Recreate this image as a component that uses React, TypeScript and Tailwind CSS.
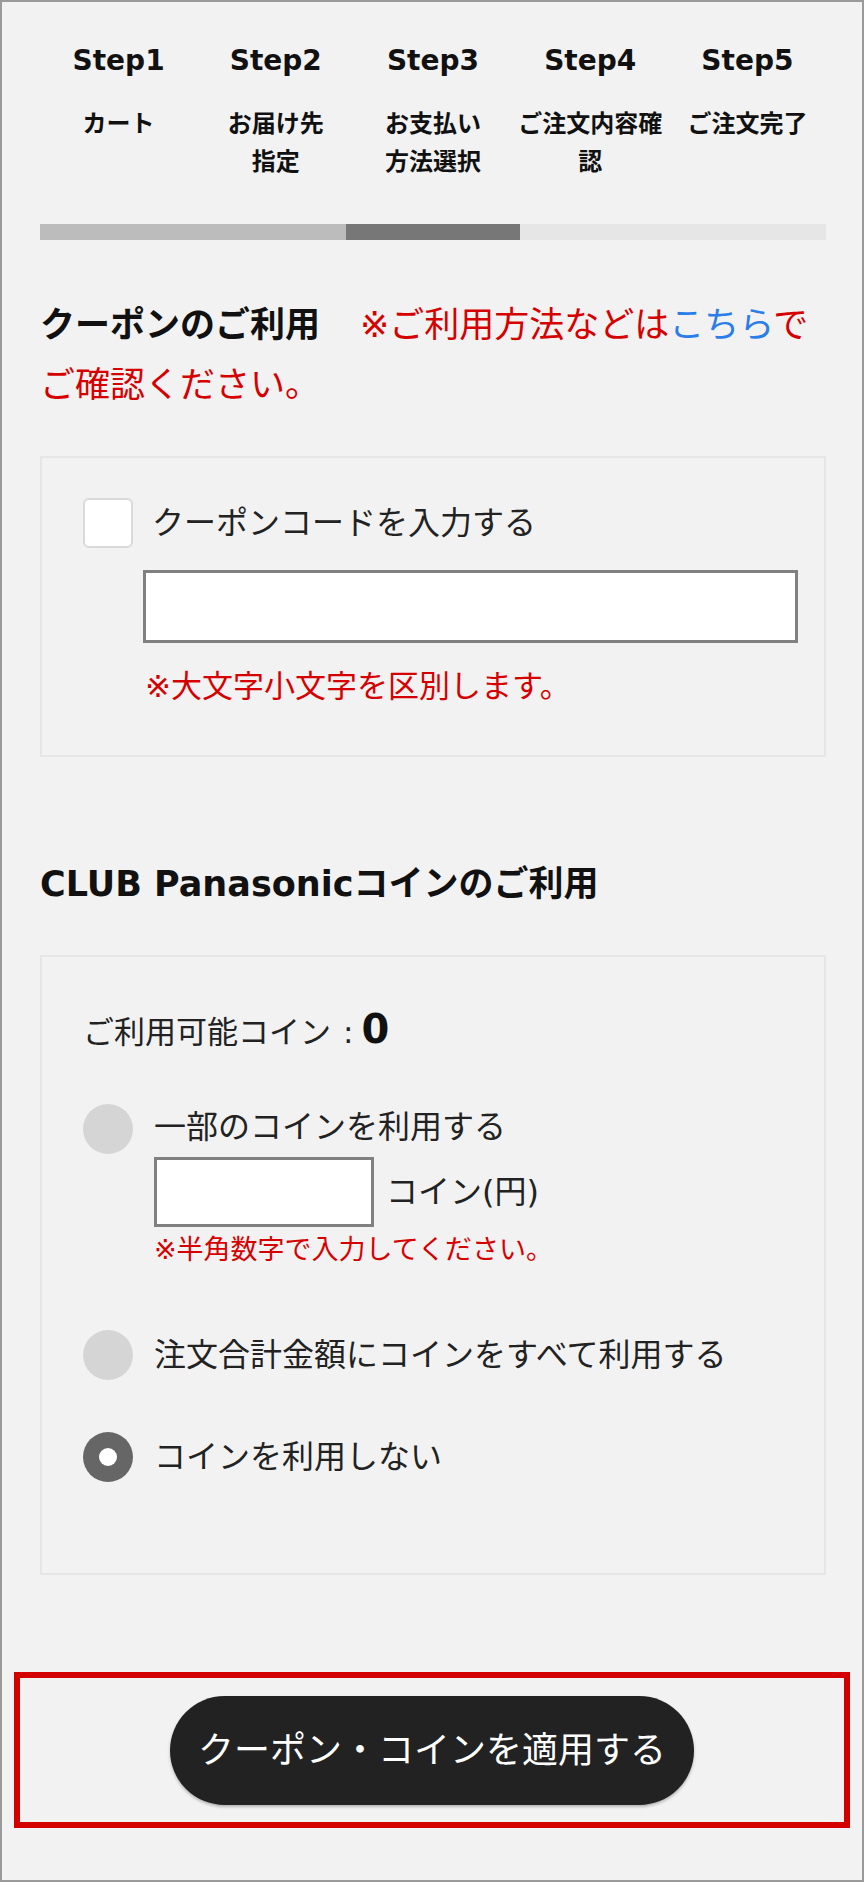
import React from 'react';

const steps = [
  { no: 'Step1', label: ['カート'] },
  { no: 'Step2', label: ['お届け先', '指定'] },
  { no: 'Step3', label: ['お支払い', '方法選択'] },
  { no: 'Step4', label: ['ご注文内容確認'] },
  { no: 'Step5', label: ['ご注文完了'] },
];

function Radio({ checked }: { checked?: boolean }) {
  if (checked) {
    return (
      <span className="flex h-[50px] w-[50px] shrink-0 items-center justify-center rounded-full bg-[#666666]">
        <span className="h-[18px] w-[18px] rounded-full bg-white" />
      </span>
    );
  }
  return <span className="block h-[50px] w-[50px] shrink-0 rounded-full bg-[#d5d5d5]" />;
}

export default function App() {
  return (
    <div className="h-[1882px] border-2 border-[#9a9a9a] bg-[#f2f2f2] font-['DejaVu_Sans','Noto_Sans_CJK_JP',sans-serif] text-[#222222]">
      <div className="pl-[38px] pr-[36px] pt-[42px]">
        {/* Steps */}
        <div className="grid grid-cols-5">
          {steps.map((s) => (
            <div key={s.no} className="flex flex-col items-center text-center">
              <div className="text-[28px] font-bold leading-[34px] text-[#111111]">{s.no}</div>
              <div className="mt-[27px] text-[24px] font-bold leading-[38px] text-[#111111]">
                {s.label.map((l, i) => (
                  <React.Fragment key={i}>
                    {i > 0 && <br />}
                    {l}
                  </React.Fragment>
                ))}
              </div>
            </div>
          ))}
        </div>

        {/* Progress bar: done / current / pending */}
        <div className="mt-[43px] flex h-4">
          <div className="w-[306px] bg-[#bcbcbc]" />
          <div className="w-[174px] bg-[#777777]" />
          <div className="flex-1 bg-[#e6e6e6]" />
        </div>

        {/* Coupon heading */}
        <div className="mt-[55px] text-[35px] leading-[60px]">
          <span className="font-bold text-[#111111]">クーポンのご利用</span>
          <span className="ml-[40px] text-[#d60000]">
            ※ご利用方法などは<a className="text-[#2b7de9]">こちら</a>で
            <br />
            ご確認ください。
          </span>
        </div>

        {/* Coupon box */}
        <div className="mt-[41px] border-2 border-[#e6e6e6] pb-[49px] pl-[41px] pt-[40px]">
          <label className="flex items-center">
            <span className="block h-[50px] w-[50px] rounded-[6px] border-2 border-[#dadada] bg-white" />
            <span className="ml-[19px] text-[32px] leading-[40px]">クーポンコードを入力する</span>
          </label>
          <input
            type="text"
            className="ml-[60px] mt-[22px] block h-[73px] w-[655px] border-[3px] border-[#808080] bg-white outline-none"
          />
          <p className="ml-[62px] mt-[23px] text-[31px] leading-[40px] text-[#d60000]">※大文字小文字を区別します。</p>
        </div>

        {/* Coin heading */}
        <h2 className="mt-[102px] text-[35px] font-bold leading-[50px] text-[#111111]">CLUB Panasonicコインのご利用</h2>

        {/* Coin box */}
        <div className="mt-[46px] border-2 border-[#e6e6e6] pb-[91px] pl-[41px] pt-[47px]">
          <div className="flex items-baseline text-[31px] leading-[50px]">
            ご利用可能コイン<span className="ml-[12px]">:</span>
            <span className="ml-[8px] text-[40px] font-bold text-[#111111]">0</span>
          </div>

          <div className="mt-[47px] flex items-start">
            <Radio />
            <div className="ml-[21px] pt-[3px]">
              <div className="text-[32px] leading-[40px]">一部のコインを利用する</div>
              <div className="mt-[10px] flex items-center">
                <input type="text" className="block h-[70px] w-[220px] border-[3px] border-[#808080] bg-white outline-none" />
                <span className="ml-[12px] text-[32px] leading-[40px]">コイン(円)</span>
              </div>
              <p className="mt-[5px] text-[27px] leading-[36px] text-[#d60000]">※半角数字で入力してください。</p>
            </div>
          </div>

          <div className="mt-[62px] flex items-center">
            <Radio />
            <span className="ml-[21px] text-[32px] leading-[40px]">注文合計金額にコインをすべて利用する</span>
          </div>

          <div className="mt-[52px] flex items-center">
            <Radio checked />
            <span className="ml-[21px] text-[32px] leading-[40px]">コインを利用しない</span>
          </div>
        </div>
      </div>

      {/* Apply button, highlighted */}
      <div className="mx-[12px] mt-[97px] flex justify-center border-[6px] border-[#d40000] pb-[17px] pt-[18px]">
        <button className="h-[109px] w-[524px] rounded-full bg-[#222222] text-[36px] leading-none text-white shadow-[0_2px_3px_rgba(0,0,0,0.25)]">
          クーポン・コインを適用する
        </button>
      </div>
    </div>
  );
}
